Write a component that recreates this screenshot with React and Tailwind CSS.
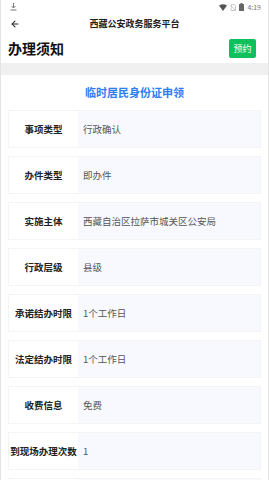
import { ArrowLeft } from "lucide-react";

const rows = [
  ["事项类型", "行政确认"],
  ["办件类型", "即办件"],
  ["实施主体", "西藏自治区拉萨市城关区公安局"],
  ["行政层级", "县级"],
  ["承诺结办时限", "1个工作日"],
  ["法定结办时限", "1个工作日"],
  ["收费信息", "免费"],
  ["到现场办理次数", "1"],
  ["", ""],
];

const StatusBar = () => (
  <div className="h-[14px] flex items-center justify-between pl-[9px] pr-[7px]">
    <svg width="7" height="8" viewBox="0 0 7 8">
      <path d="M3.5 0v4.5M1.5 3l2 2 2-2" stroke="#777" strokeWidth="1" fill="none" />
      <rect x="0.5" y="6.5" width="6" height="1" fill="#777" />
    </svg>
    <div className="flex items-center gap-[3px]">
      <svg width="8" height="7" viewBox="0 0 8 7">
        <path d="M0 1.5 Q4 -1 8 1.5 L4 7 Z" fill="#555" />
      </svg>
      <svg width="6" height="7" viewBox="0 0 6 7">
        <path d="M1.5 0.5h3l1 1v5h-4.5z" fill="none" stroke="#bbb" strokeWidth="0.8" />
        <path d="M0.5 1 L5.5 6.5" stroke="#bbb" strokeWidth="0.8" />
      </svg>
      <svg width="5" height="8" viewBox="0 0 5 8">
        <rect x="1.5" y="0" width="2" height="1" fill="#666" />
        <rect x="0" y="1" width="5" height="7" rx="0.5" fill="#666" />
      </svg>
      <span className="text-[7px] leading-none text-[#777]">4:19</span>
    </div>
  </div>
);

export default function App() {
  return (
    <div
      className="h-[480px] bg-white border-x border-[#e4e4e4] overflow-hidden"
      style={{ fontFamily: '"Noto Sans CJK SC", "Noto Sans", sans-serif' }}
    >
      <StatusBar />

      {/* Nav */}
      <div className="relative h-[19px] flex items-center justify-center">
        <ArrowLeft className="absolute left-[9px] w-[10px] h-[10px] text-[#222]" strokeWidth={2.5} />
        <span className="text-[9px] font-bold text-[#222]">西藏公安政务服务平台</span>
      </div>

      {/* Header */}
      <div className="h-[30px] flex items-center justify-between pl-[7px] pr-[12px]">
        <h1 className="text-[14px] font-bold text-[#111] leading-none">办理须知</h1>
        <button className="w-[27px] h-[19px] bg-[#0fc15c] rounded-[2px] text-[9px] text-white leading-none">
          预约
        </button>
      </div>

      <div className="h-[12px] bg-[#f0f0f0]" />

      {/* Content */}
      <div className="px-[7px] pt-[10px]">
        <h2 className="text-center text-[11px] leading-[15px] font-bold text-[#2d7df6] mb-[10px]">
          临时居民身份证申领
        </h2>

        <div className="flex flex-col gap-[8px]">
          {rows.map(([label, value], i) => (
            <div key={i} className="h-[38px] shrink-0 flex border border-[#f4f4f4]">
              <div className="w-[69px] shrink-0 flex items-center justify-center bg-white">
                <span className="text-[9.5px] font-bold text-[#222] whitespace-nowrap">{label}</span>
              </div>
              <div className="flex-1 flex items-center pl-[5px] bg-[#f8f9fe]">
                <span className="text-[9.5px] text-[#555] whitespace-nowrap">{value}</span>
              </div>
            </div>
          ))}
        </div>
      </div>
    </div>
  );
}
